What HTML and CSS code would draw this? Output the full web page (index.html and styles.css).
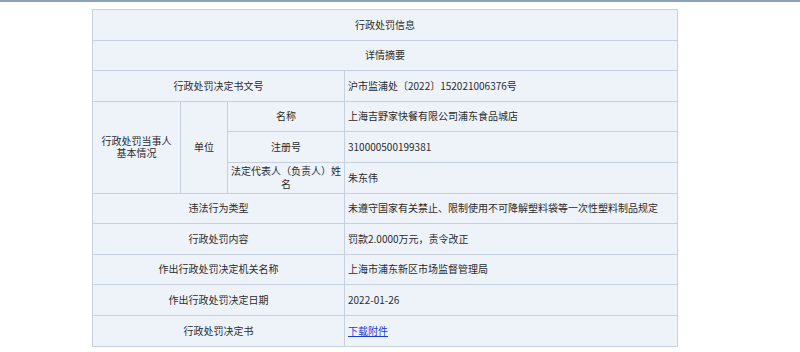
FILE: index.html
```html
<!DOCTYPE html>
<html lang="zh-CN">
<head>
<meta charset="utf-8">
<title>行政处罚信息</title>
<link rel="stylesheet" href="styles.css">
</head>
<body>
<div class="topbar"></div>
<div class="wrap">
<table class="info">
  <colgroup>
    <col class="c1"><col class="c2"><col class="c3"><col class="c4">
  </colgroup>
  <tr><td colspan="4" class="center">行政处罚信息</td></tr>
  <tr><td colspan="4" class="center">详情摘要</td></tr>
  <tr><td colspan="3" class="center">行政处罚决定书文号</td><td class="val">沪市监浦处〔2022〕152021006376号</td></tr>
  <tr>
    <td rowspan="3" class="center"><span class="narrow">行政处罚当事人基本情况</span></td>
    <td rowspan="3" class="center">单位</td>
    <td class="center">名称</td>
    <td class="val">上海吉野家快餐有限公司浦东食品城店</td>
  </tr>
  <tr><td class="center">注册号</td><td class="val">310000500199381</td></tr>
  <tr><td class="center tight">法定代表人（负责人）姓名</td><td class="val">朱东伟</td></tr>
  <tr><td colspan="3" class="center">违法行为类型</td><td class="val">未遵守国家有关禁止、限制使用不可降解塑料袋等一次性塑料制品规定</td></tr>
  <tr><td colspan="3" class="center">行政处罚内容</td><td class="val">罚款2.0000万元，责令改正</td></tr>
  <tr><td colspan="3" class="center">作出行政处罚决定机关名称</td><td class="val">上海市浦东新区市场监督管理局</td></tr>
  <tr><td colspan="3" class="center">作出行政处罚决定日期</td><td class="val">2022-01-26</td></tr>
  <tr><td colspan="3" class="center">行政处罚决定书</td><td class="val"><a href="#" class="link">下载附件</a></td></tr>
</table>
</div>
</body>
</html>
```
FILE: styles.css
```css
html, body {
  margin: 0;
  padding: 0;
  background: #ffffff;
}
body {
  font-family: "Noto Sans CJK SC", "Microsoft YaHei", sans-serif;
  font-size: 10px;
  color: #2b2b2b;
}
.topbar {
  height: 2px;
  background: #8aa3bb;
}
.wrap {
  padding: 7px 0 0 92px;
}
.info {
  border-collapse: collapse;
  width: 585px;
  table-layout: fixed;
  background: #eef3fa;
  border: 1px solid #c6d1dd;
}
.c1 { width: 88px; }
.c2 { width: 47px; }
.c3 { width: 117px; }
.c4 { width: 333px; }
.info td {
  border: 1px solid #c6d1dd;
  height: 29.6px;
  padding: 0 3px;
  line-height: 12.4px;
  vertical-align: middle;
}
.center { text-align: center; }
.narrow {
  display: inline-block;
  width: 72px;
}
.tight { padding: 0 1px !important; }
.val { text-align: left; }
.link {
  color: #1a3fd6;
  text-decoration: underline;
}
```
